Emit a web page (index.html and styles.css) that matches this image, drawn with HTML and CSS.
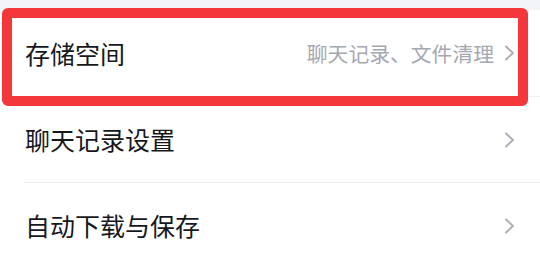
FILE: index.html
```html
<!DOCTYPE html>
<html lang="zh-CN">
<head>
    <meta charset="utf-8" />
    <title>设置</title>
    <link rel="stylesheet" href="styles.css">
</head>
<body>
    <div class="gap"></div>
    <div class="list">
        <div class="row">
            <span class="label">存储空间</span>
            <span class="value">聊天记录、文件清理</span>
            <svg class="arrow" viewBox="0 0 12 16"><path d="M2 1.5 L9 8 L2 14.5" /></svg>
        </div>
        <div class="row">
            <span class="label">聊天记录设置</span>
            <svg class="arrow" viewBox="0 0 12 16"><path d="M2 1.5 L9 8 L2 14.5" /></svg>
        </div>
        <div class="row">
            <span class="label">自动下载与保存</span>
            <svg class="arrow" viewBox="0 0 12 16"><path d="M2 1.5 L9 8 L2 14.5" /></svg>
        </div>
    </div>
    <!-- red highlight drawn over the first row -->
    <div class="mark"></div>
</body>
</html>
```

FILE: styles.css
```css
body{
    margin:0;
    background:#ffffff;
    font-family:"Noto Sans CJK SC","Noto Sans",sans-serif;
    position:relative;
    width:540px;
    height:266px;
    overflow:hidden;
}

.gap{
    height:10px;
    background:#f3f4f8;
}

.row{
    display:flex;
    align-items:center;
    height:85px;
    padding:0 24px 0 25px;
    position:relative;
}

.row:first-child{
    height:86px;
}

.row + .row{
    margin-top:1px;
}

.row + .row::before{
    content:"";
    position:absolute;
    top:-1px;
    left:24px;
    right:0;
    height:1px;
    background:#efeff1;
}

.label{
    font-size:25px;
    color:#17181c;
    flex:1;
    line-height:1;
}

.value{
    font-size:20.8px;
    color:#a6a8b1;
    margin-right:10px;
    line-height:1;
}

.arrow{
    width:12px;
    height:16px;
    fill:none;
    stroke:#aeb0b8;
    stroke-width:2;
    stroke-linecap:round;
    stroke-linejoin:round;
}

.mark{
    position:absolute;
    left:2px;
    top:8px;
    width:506px;
    height:78px;
    border:10px solid #f4373b;
    border-radius:6px;
}
```
